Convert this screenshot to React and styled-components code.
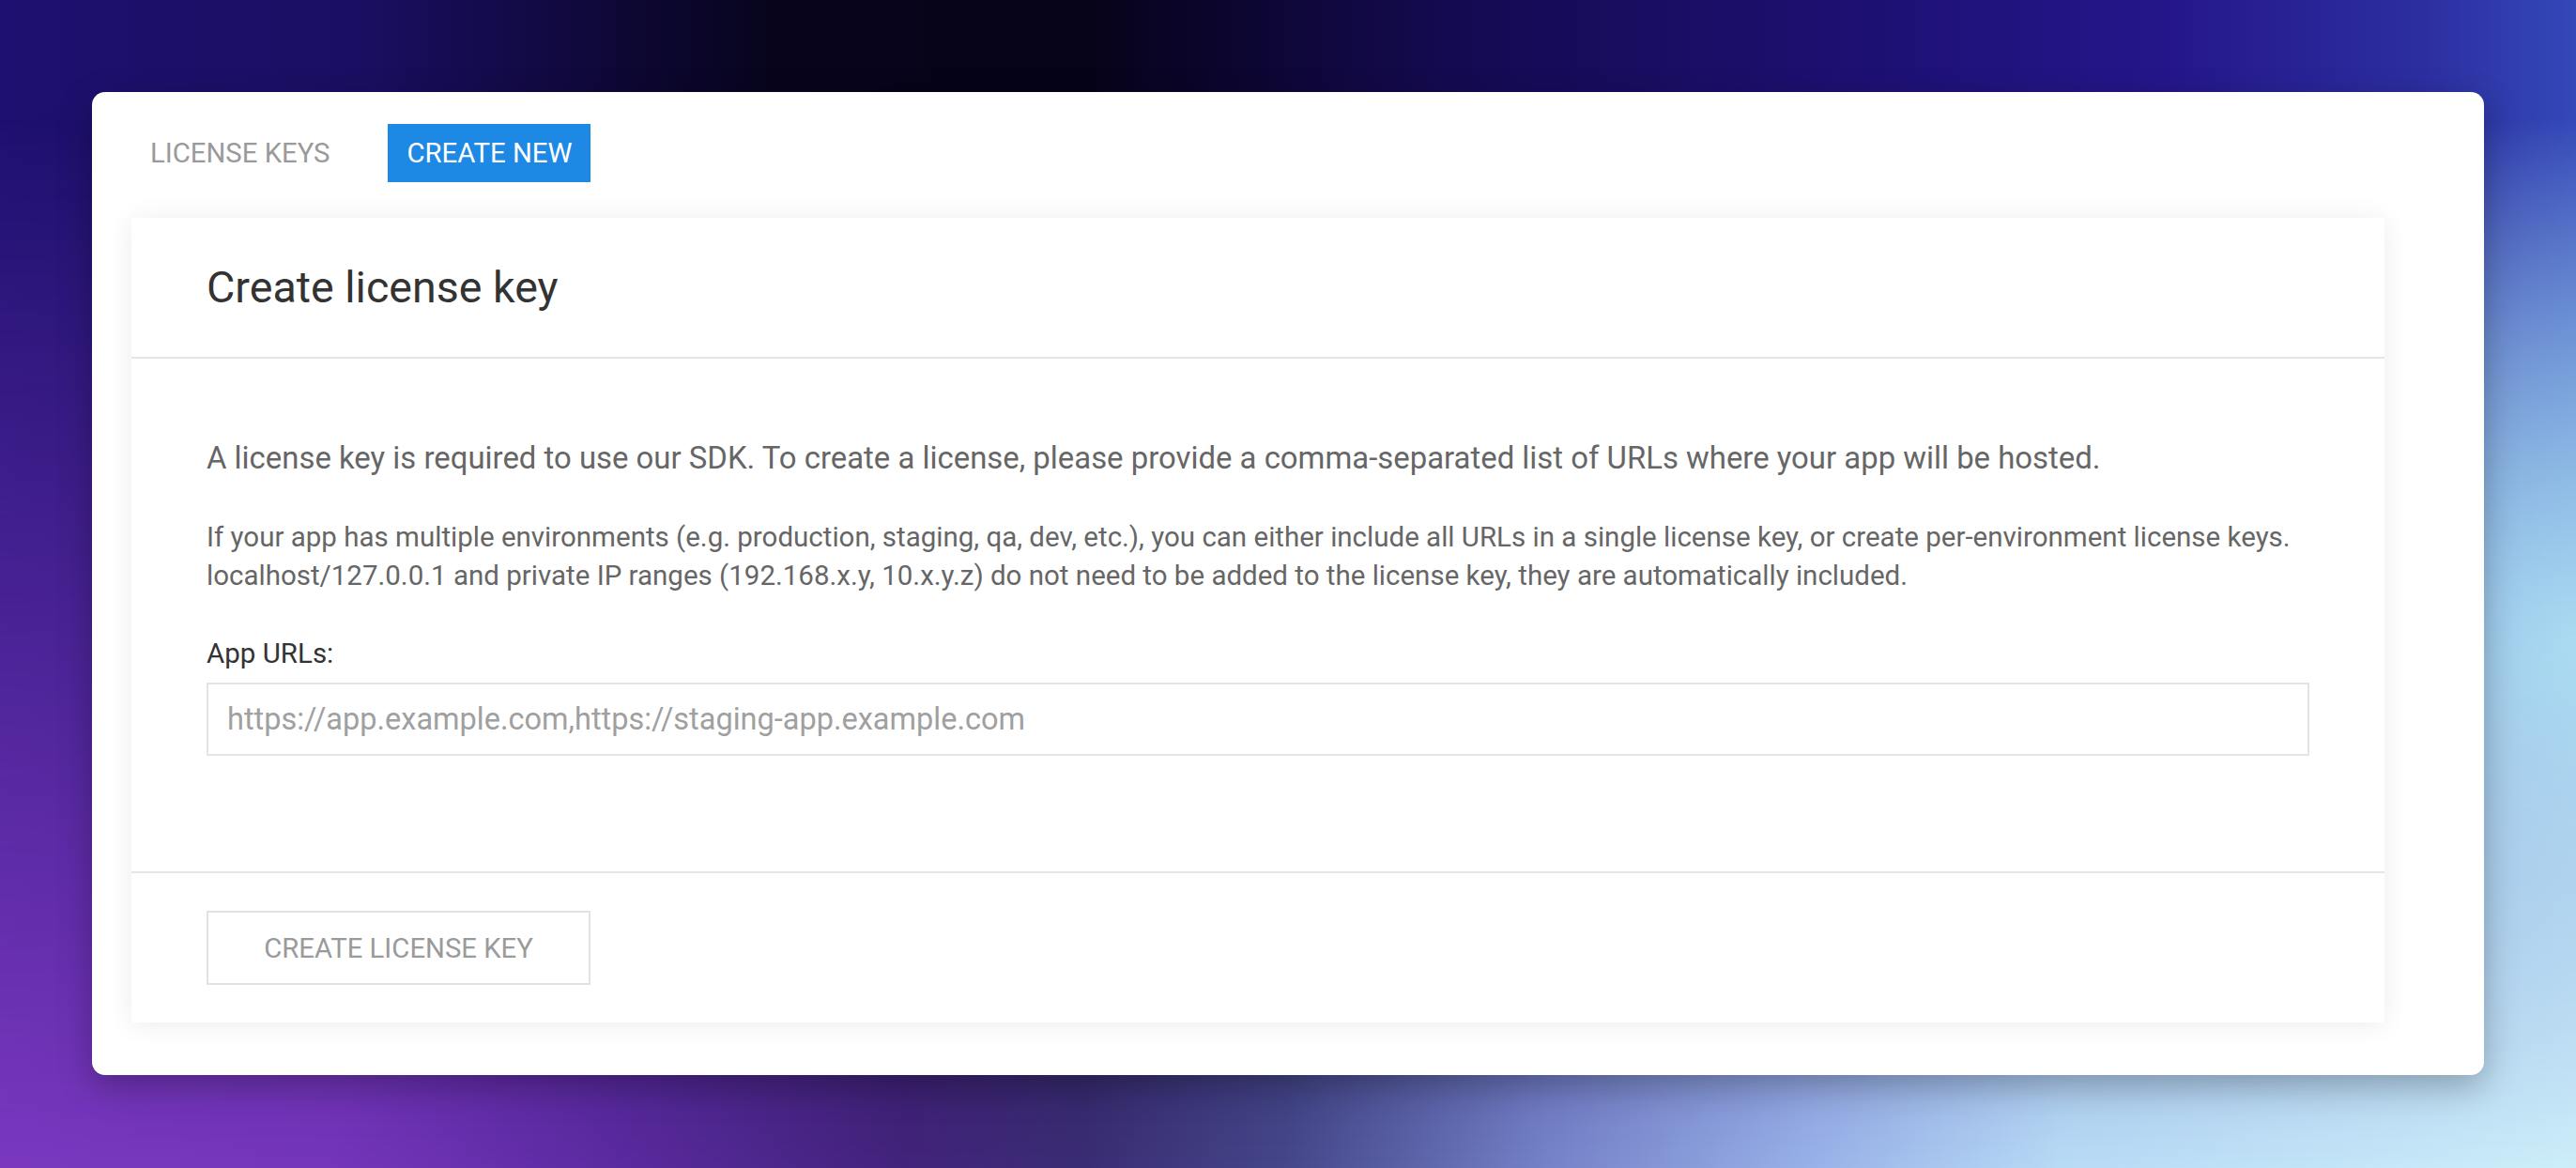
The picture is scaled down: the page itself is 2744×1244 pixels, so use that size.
import React from "react";
import styled, { createGlobalStyle } from "styled-components";

const GlobalStyle = createGlobalStyle`
  html, body {
    margin: 0;
    padding: 0;
  }
  body {
    font-family: Roboto, "Liberation Sans", Arial, sans-serif;
    -webkit-font-smoothing: antialiased;
  }
  * {
    box-sizing: border-box;
  }
`;

// backdrop: top row gradient on the page, bottom row gradient faded in below it
const Page = styled.div`
  position: relative;
  min-height: 100vh;
  padding: 98px;
  background:
    radial-gradient(22% 45% at 100% 55%, rgba(150, 222, 244, 0.85) 0%, rgba(150, 222, 244, 0) 100%),
    linear-gradient(
      90deg,
      #1e1070 0%,
      #1a0e62 14%,
      #07041c 30%,
      #060318 42%,
      #140a50 56%,
      #1c0f6e 70%,
      #24168a 84%,
      #2c2ea0 94%,
      #3448b8 100%
    );

  &::before {
    content: "";
    position: absolute;
    inset: 0;
    background: linear-gradient(
      90deg,
      #7a38c0 0%,
      #7535bb 13%,
      #5a2aa0 24%,
      #42237c 35%,
      #3a2c74 42%,
      #45478a 50%,
      #7582c8 60%,
      #98b0e8 70%,
      #b8dbf6 80%,
      #cdeef9 100%
    );
    -webkit-mask-image: linear-gradient(180deg, transparent 10%, #000 100%);
    mask-image: linear-gradient(180deg, transparent 10%, #000 100%);
  }
`;

const Panel = styled.div`
  position: relative;
  z-index: 1;
  background: #fff;
  border-radius: 14px;
  padding: 34px 106px 56px 42px;
  box-shadow: 0 12px 36px rgba(0, 0, 0, 0.28);
`;

const TabBar = styled.div`
  display: flex;
  gap: 42px;
  margin-bottom: 38px;
`;

const Tab = styled.button`
  height: 62px;
  padding: 0 20px;
  border: none;
  background: ${(p) => (p.active ? "#1e88e5" : "transparent")};
  color: ${(p) => (p.active ? "#fff" : "#9a9a9a")};
  font-family: inherit;
  font-size: 29.3px;
  text-transform: uppercase;
  cursor: pointer;
`;

const Card = styled.section`
  background: #fff;
  box-shadow: 0 2px 26px rgba(0, 0, 0, 0.08);
`;

const CardHeader = styled.header`
  height: 150px;
  display: flex;
  align-items: center;
  padding: 0 80px;
  border-bottom: 2px solid #e6e6e6;
`;

const Title = styled.h2`
  margin: 0;
  font-size: 46.6px;
  font-weight: 400;
  color: #333;
`;

const CardBody = styled.div`
  padding: 82px 80px 123px;
`;

const Lead = styled.p`
  margin: 0 0 41px;
  font-size: 32.9px;
  line-height: 47px;
  color: #666;
`;

const Note = styled.p`
  margin: 0 0 42px;
  font-size: 29.5px;
  line-height: 41px;
  color: #666;
`;

const Label = styled.label`
  display: block;
  font-size: 29.5px;
  line-height: 41px;
  color: #333;
  margin-bottom: 10px;
`;

const Input = styled.input`
  display: block;
  width: 100%;
  height: 78px;
  padding: 0 20px;
  border: 2px solid #e4e4e4;
  font-family: inherit;
  font-size: 32.5px;
  color: #333;
  outline: none;

  &::placeholder {
    color: #a0a0a0;
  }
`;

const CardFooter = styled.footer`
  padding: 40px 80px;
  border-top: 2px solid #e6e6e6;
`;

const OutlineButton = styled.button`
  width: 409px;
  height: 79px;
  border: 2px solid #e2e2e2;
  background: #fff;
  color: #9a9a9a;
  font-family: inherit;
  font-size: 29.3px;
  text-transform: uppercase;
`;

export default function App() {
  return (
    <>
      <GlobalStyle />
      <Page>
        <Panel>
          <TabBar>
            <Tab>License keys</Tab>
            <Tab active>Create new</Tab>
          </TabBar>
          <Card>
            <CardHeader>
              <Title>Create license key</Title>
            </CardHeader>
            <CardBody>
              <Lead>
                A license key is required to use our SDK. To create a license, please provide a
                comma-separated list of URLs where your app will be hosted.
              </Lead>
              <Note>
                If your app has multiple environments (e.g. production, staging, qa, dev, etc.), you
                can either include all URLs in a single license key, or create per-environment license
                keys.
                <br />
                localhost/127.0.0.1 and private IP ranges (192.168.x.y, 10.x.y.z) do not need to be
                added to the license key, they are automatically included.
              </Note>
              <Label htmlFor="app-urls">App URLs:</Label>
              <Input
                id="app-urls"
                type="text"
                placeholder="https://app.example.com,https://staging-app.example.com"
              />
            </CardBody>
            <CardFooter>
              <OutlineButton disabled>Create license key</OutlineButton>
            </CardFooter>
          </Card>
        </Panel>
      </Page>
    </>
  );
}
